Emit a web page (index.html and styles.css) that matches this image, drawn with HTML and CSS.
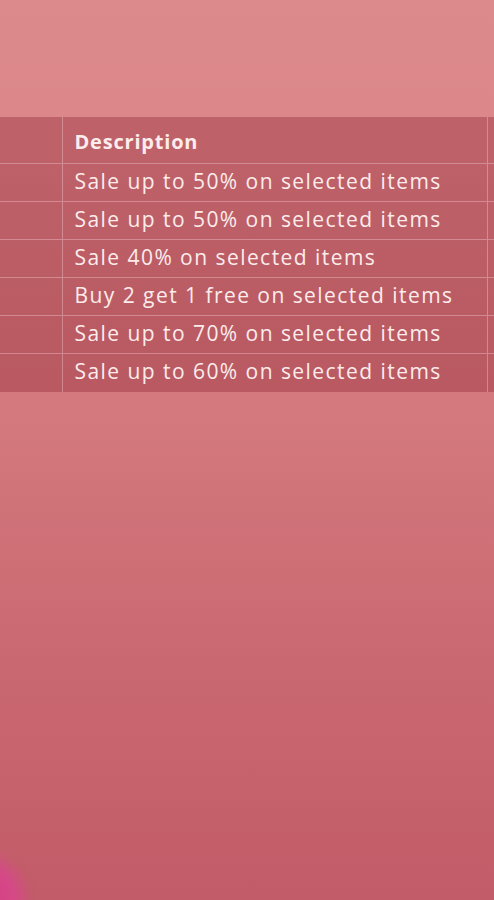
FILE: index.html
```html
<!DOCTYPE html>
<html lang="en">
<head>
<meta charset="utf-8">
<title>Offers</title>
<link rel="stylesheet" href="styles.css">
</head>
<body>
<main class="page">
  <div class="table-wrap">
    <table class="offers">
      <thead>
        <tr><th class="c-first"></th><th class="c-desc">Description</th><th class="c-last"></th></tr>
      </thead>
      <tbody>
        <tr><td class="c-first"></td><td class="c-desc">Sale up to 50% on selected items</td><td class="c-last"></td></tr>
        <tr><td class="c-first"></td><td class="c-desc">Sale up to 50% on selected items</td><td class="c-last"></td></tr>
        <tr><td class="c-first"></td><td class="c-desc">Sale 40% on selected items</td><td class="c-last"></td></tr>
        <tr><td class="c-first"></td><td class="c-desc">Buy 2 get 1 free on selected items</td><td class="c-last"></td></tr>
        <tr><td class="c-first"></td><td class="c-desc">Sale up to 70% on selected items</td><td class="c-last"></td></tr>
        <tr><td class="c-first"></td><td class="c-desc">Sale up to 60% on selected items</td><td class="c-last"></td></tr>
      </tbody>
    </table>
  </div>
  <div class="blob"></div>
</main>
</body>
</html>
```

FILE: styles.css
```css
html, body {
  margin: 0;
  padding: 0;
  height: 100%;
  overflow: hidden;
}
body {
  background: linear-gradient(180deg, #dd8a8c 0%, #dc888b 13%, #d47a7e 45%, #cb6a72 70%, #c25c68 100%);
  font-family: "Open Sans", "Noto Sans", sans-serif;
  color: #fcecec;
}
.page {
  position: relative;
  height: 900px;
  padding-top: 117px;
  box-sizing: border-box;
  overflow: hidden;
}
.table-wrap {
  width: 494px;
  overflow: hidden;
}
.offers {
  border-collapse: collapse;
  background: rgba(130, 20, 40, 0.33);
  width: 560px;
  table-layout: fixed;
}
.offers th, .offers td {
  border-top: 1px solid rgba(255, 220, 225, 0.35);
  border-right: 1px solid rgba(255, 220, 225, 0.35);
  text-align: left;
  white-space: nowrap;
  box-sizing: border-box;
}
.offers thead th { border-top: none; }
.offers th {
  height: 46px;
  line-height: 30px;
  padding: 10px 12px 6px;
  font-weight: 700;
  font-size: 20px;
  letter-spacing: 0.8px;
}
.offers td {
  height: 38px;
  line-height: 32px;
  padding: 0 12px 4px;
  font-size: 21px;
  font-weight: 400;
  letter-spacing: 1.45px;
}
.c-first { width: 62px; }
.c-desc { width: 425px; }
.c-last { width: 73px; }
.blob {
  position: absolute;
  left: -72px;
  top: 848px;
  width: 104px;
  height: 104px;
  border-radius: 50%;
  background: radial-gradient(circle, #d43f7c 0%, #d6488a 45%, rgba(214, 90, 130, 0) 72%);
  filter: blur(3px);
}
```
